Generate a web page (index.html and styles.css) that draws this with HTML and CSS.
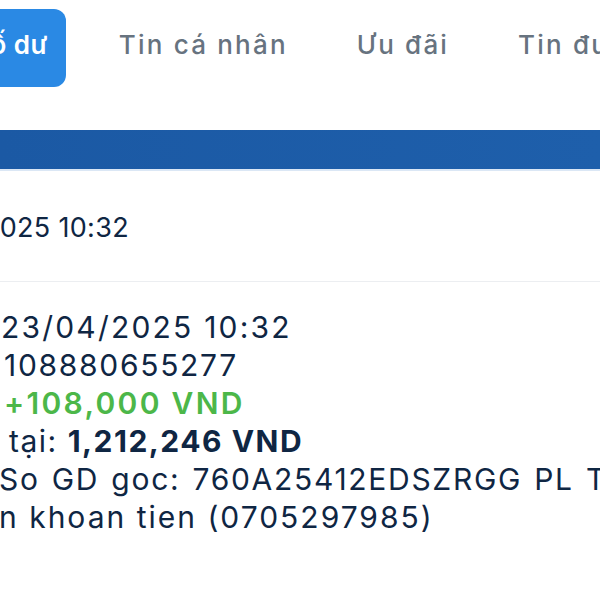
FILE: index.html
```html
<!DOCTYPE html>
<html lang="vi">
<head>
<meta charset="utf-8">
<title>Biến động số dư</title>
<link rel="stylesheet" href="styles.css">
</head>
<body>
<div class="page">
  <nav class="tabs">
    <div class="tab active">Số dư</div>
    <div class="tab">Tin cá nhân</div>
    <div class="tab">Ưu đãi</div>
    <div class="tab">Tin đưa</div>
  </nav>
  <div class="band"></div>
  <div class="summary">
    <div class="line l-top">2025 10:32</div>
  </div>
  <div class="detail">
    <div class="line l1">23/04/2025 10:32</div>
    <div class="line l2">108880655277</div>
    <div class="line l3 green">+108,000 VND</div>
    <div class="line l4">tại: <b>1,212,246 VND</b></div>
    <div class="line l5">So GD goc: 760A25412EDSZRGG PL TCB</div>
    <div class="line l6">n khoan tien (0705297985)</div>
  </div>
</div>
</body>
</html>
```
FILE: styles.css
```css
html, body {
  margin: 0;
  padding: 0;
  background: #ffffff;
}
body {
  width: 600px;
  height: 600px;
  overflow: hidden;
  font-family: "Inter", "Noto Sans", sans-serif;
}
.page {
  display: flex;
  flex-direction: column;
}
.tabs {
  display: flex;
  gap: 35px;
  padding-top: 9px;
  margin-left: -45px;
  white-space: nowrap;
}
.tab {
  height: 78px;
  box-sizing: border-box;
  padding: 0 16px 7px 18px;
  display: flex;
  align-items: center;
  font-size: 26px;
  letter-spacing: 2.2px;
  font-weight: 500;
  color: #67737f;
}
.tab.active {
  padding-right: 18px;
  letter-spacing: 0.5px;
  background: #2a89e4;
  color: #ffffff;
  font-weight: 600;
  border-radius: 12px;
}
.band {
  margin-top: 43px;
  height: 39px;
  background: linear-gradient(90deg, #1b59a4, #1e5fab);
  border-bottom: 2px solid #dbe7f5;
}
.summary {
  height: 110px;
  display: flex;
  align-items: center;
  border-bottom: 1px solid #eceef1;
}
.line {
  white-space: nowrap;
  font-size: 30px;
  line-height: 38px;
  letter-spacing: 1.7px;
  color: #0f2643;
}
.l-top {
  font-size: 27px;
  letter-spacing: 0.3px;
  margin-left: -17px;
  margin-top: 4px;
}
.detail {
  padding-top: 26px;
}
.l1 { margin-left: 1px; letter-spacing: 2.2px; }
.l2 { margin-left: 4px; }
.l3 { margin-left: 4px; font-weight: 600; letter-spacing: 2.3px; }
.l4 { margin-left: 9px; letter-spacing: 1.5px; }
.l5 { margin-left: -1px; word-spacing: 2px; }
.l6 { margin-left: -1px; letter-spacing: 2px; }
.green { color: #4cb749; }
b { font-weight: 700; }
```
